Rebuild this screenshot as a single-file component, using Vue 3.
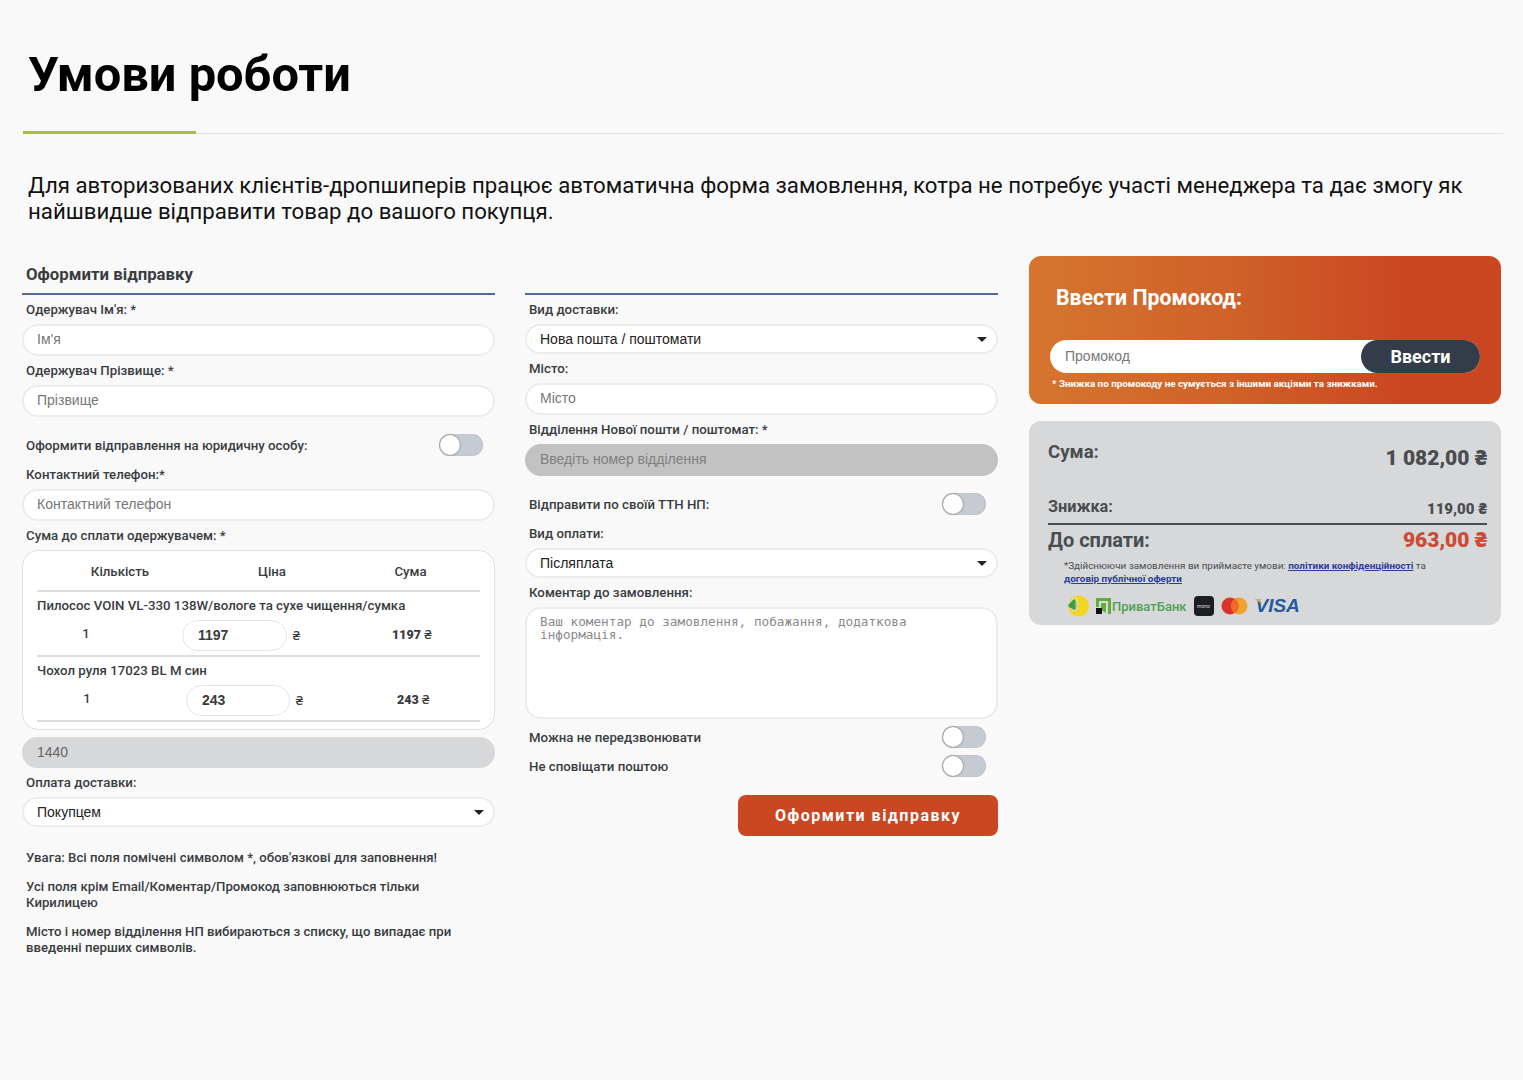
<script setup>
import { ref } from 'vue'

const items = ref([
  { name: 'Пилосос VOIN VL-330 138W/вологе та сухе чищення/сумка', qty: 1, price: '1197', cols: 'row-a' },
  { name: 'Чохол руля 17023 BL M син', qty: 1, price: '243', cols: 'row-b' }
])
</script>

<template>
  <div class="page">
    <h1 class="title">Умови роботи</h1>
    <div class="title-line"><span></span></div>
    <p class="intro">Для авторизованих клієнтів-дропшиперів працює автоматична форма замовлення, котра не потребує участі менеджера та дає змогу як найшвидше відправити товар до вашого покупця.</p>

    <div class="columns">
      <div class="col">
        <h3 class="col-title">Оформити відправку</h3>
        <label class="lbl">Одержувач Ім'я: *</label>
        <input class="inp" placeholder="Ім'я" />
        <label class="lbl">Одержувач Прізвище: *</label>
        <input class="inp" placeholder="Прізвище" />
        <div class="switch-row">
          <span>Оформити відправлення на юридичну особу:</span>
          <i class="toggle"></i>
        </div>
        <label class="lbl">Контактний телефон:*</label>
        <input class="inp" placeholder="Контактний телефон" />
        <label class="lbl">Сума до сплати одержувачем: *</label>

        <div class="goods">
          <div class="goods-head">
            <span>Кількість</span>
            <span>Ціна</span>
            <span>Сума</span>
          </div>
          <div v-for="item in items" :key="item.name" class="good" :class="item.cols">
            <div class="good-name">{{ item.name }}</div>
            <div class="good-row">
              <span class="good-qty">{{ item.qty }}</span>
              <input class="price-inp" :value="item.price" />
              <span class="cur">₴</span>
              <span class="good-sum"><b>{{ item.price }}</b> ₴</span>
            </div>
          </div>
        </div>

        <input class="inp disabled total" value="1440" disabled />
        <label class="lbl">Оплата доставки:</label>
        <div class="sel-wrap">
          <select class="sel"><option>Покупцем</option></select>
        </div>

        <div class="notes">
          <p>Увага: Всі поля помічені символом *, обов'язкові для заповнення!</p>
          <p>Усі поля крім Email/Коментар/Промокод заповнюються тільки Кирилицею</p>
          <p>Місто і номер відділення НП вибираються з списку, що випадає при введенні перших символів.</p>
        </div>
      </div>

      <div class="col">
        <div class="col-title blank"></div>
        <label class="lbl">Вид доставки:</label>
        <div class="sel-wrap">
          <select class="sel"><option>Нова пошта / поштомати</option></select>
        </div>
        <label class="lbl">Місто:</label>
        <input class="inp" placeholder="Місто" />
        <label class="lbl">Відділення Нової пошти / поштомат: *</label>
        <input class="inp disabled dark" placeholder="Введіть номер відділення" disabled />
        <div class="switch-row">
          <span>Відправити по своїй ТТН НП:</span>
          <i class="toggle"></i>
        </div>
        <label class="lbl">Вид оплати:</label>
        <div class="sel-wrap">
          <select class="sel"><option>Післяплата</option></select>
        </div>
        <label class="lbl">Коментар до замовлення:</label>
        <textarea class="area" placeholder="Ваш коментар до замовлення, побажання, додаткова інформація."></textarea>
        <div class="switch-row small">
          <span>Можна не передзвонювати</span>
          <i class="toggle"></i>
        </div>
        <div class="switch-row small">
          <span>Не сповіщати поштою</span>
          <i class="toggle"></i>
        </div>
        <div class="submit-wrap">
          <button class="submit">Оформити відправку</button>
        </div>
      </div>

      <div class="col side">
        <div class="promo">
          <div class="promo-title">Ввести Промокод:</div>
          <div class="promo-form">
            <input class="promo-inp" placeholder="Промокод" />
            <button class="promo-btn">Ввести</button>
          </div>
          <div class="promo-note">* Знижка по промокоду не сумується з іншими акціями та знижками.</div>
        </div>

        <div class="summary">
          <div class="sum-row sum-a">
            <span>Сума:</span>
            <b>1 082,00 ₴</b>
          </div>
          <div class="sum-row sum-b">
            <span>Знижка:</span>
            <b>119,00 ₴</b>
          </div>
          <div class="sum-row sum-c">
            <span>До сплати:</span>
            <b>963,00 ₴</b>
          </div>
          <p class="terms">*Здійснюючи замовлення ви приймаєте умови: <a href="#">політики конфіденційності</a> та <a href="#">договір публічної оферти</a></p>
          <div class="pay">
            <svg width="22" height="22" viewBox="0 0 22 22">
              <circle cx="11.5" cy="11" r="10.5" fill="#f2d525" />
              <path d="M0.5 11 C2 7 5 4 8.5 2.5 C11.5 6 12 12 9 16.5 C5.5 16 2.5 14 0.5 11 Z" fill="#dfe0d0" />
              <path d="M1 11 C2.5 8 5 5.5 8 4 L8.5 15 C5.5 14.5 3 13 1 11 Z" fill="#3f9b46" />
              <path d="M8 4 C10 7 10.5 11.5 8.5 15 C7.5 11 7.5 7.5 8 4 Z" fill="#7dbb52" />
            </svg>
            <div class="privat">
              <svg width="15" height="17" viewBox="0 0 15 17">
                <path d="M0 0 H15 V16 H12 V3 H3 V9 H0 Z" fill="#62ad3e" />
                <path d="M5 5 H10 V15 L7 13 H5 Z" fill="#62ad3e" />
                <rect x="0" y="10" width="6" height="6" fill="#111" />
              </svg>
              <span>ПриватБанк</span>
            </div>
            <div class="mono"><span>mono</span></div>
            <svg width="27" height="18" viewBox="0 0 27 18">
              <circle cx="18" cy="9" r="8.5" fill="#f0a22c" />
              <circle cx="9" cy="9" r="8.5" fill="#d9352a" />
              <path d="M13.5 2 A8.5 8.5 0 0 1 13.5 16 A8.5 8.5 0 0 1 13.5 2 Z" fill="#ee6a25" />
            </svg>
            <div class="visa">VISA</div>
          </div>
        </div>
      </div>
    </div>
  </div>
</template>

<style>
html, body {
  background: #f9f9fa;
}
</style>

<style scoped>
.page {
  height: 1080px;
  box-sizing: border-box;
  padding: 0 20px 0 22px;
  background: #f9f9fa;
  color: #3a3d40;
  font-family: Roboto, "Noto Sans", sans-serif;
  overflow: hidden;
}

.title {
  margin: 0;
  padding: 46px 0 0 6px;
  height: 85px;
  box-sizing: content-box;
  font-size: 48.8px;
  line-height: 58px;
  font-weight: 700;
  color: #000;
}

.title-line {
  height: 1px;
  margin-top: 2px;
  margin-left: 1px;
  background: #e2e2e4;
  position: relative;
}

.title-line::before {
  content: "";
  position: absolute;
  left: 0;
  top: -2px;
  width: 173px;
  height: 3px;
  background: #a9bd45;
}

.intro {
  margin: 38px 30px 0 6px;
  font-size: 22.23px;
  line-height: 26px;
  color: #111;
}

.columns {
  display: grid;
  grid-template-columns: 473px 473px 473px;
  column-gap: 30px;
  margin-top: 32px;
}

.col {
  display: flex;
  flex-direction: column;
}

.col-title {
  margin: 0;
  height: 39px;
  box-sizing: border-box;
  padding: 8px 0 0 4px;
  font-size: 16.8px;
  line-height: 20px;
  font-weight: 700;
  border-bottom: 2px solid #506a9b;
}

.lbl {
  height: 29px;
  padding-left: 4px;
  font-size: 13.25px;
  line-height: 29px;
  font-weight: 500;
}

.inp {
  height: 32px;
  box-sizing: border-box;
  width: 100%;
  padding: 0 13px 2px;
  border: 2px solid #ececec;
  border-radius: 16px;
  background: #fff;
  font-family: "Liberation Sans", Arial, sans-serif;
  font-size: 14px;
  outline: none;
}

.inp::placeholder {
  color: #777;
}

.inp.disabled {
  border-color: #d7d8da;
  background: #d7d8da;
  color: #666;
}

.inp.dark {
  border-color: #c2c2c2;
  background: #c2c2c2;
}

.inp.dark::placeholder {
  color: #808080;
}

.inp.total {
  height: 31px;
  margin-top: 7px;
}

.sel-wrap {
  position: relative;
  height: 30px;
}

.sel-wrap::after {
  content: "";
  position: absolute;
  right: 11px;
  top: 13px;
  border-left: 5px solid transparent;
  border-right: 5px solid transparent;
  border-top: 5px solid #222;
}

.sel {
  appearance: none;
  width: 100%;
  height: 30px;
  padding: 0 13px;
  border: 2px solid #ececec;
  border-radius: 15px;
  background: #fff;
  font-family: "Liberation Sans", Arial, sans-serif;
  font-size: 14px;
  color: #222;
  outline: none;
}

.switch-row {
  display: flex;
  align-items: center;
  justify-content: space-between;
  height: 22px;
  padding: 17px 12px 4px 4px;
  font-size: 13.25px;
  font-weight: 500;
}

.switch-row.small {
  padding-top: 7px;
  padding-bottom: 0;
}

.toggle {
  width: 44px;
  height: 22px;
  box-sizing: border-box;
  border-radius: 11px;
  background: #c6cad3;
  position: relative;
  box-shadow: inset 0 0 1px rgba(0, 0, 0, 0.25);
}

.toggle::before {
  content: "";
  position: absolute;
  left: 1px;
  top: 1px;
  width: 20px;
  height: 20px;
  border-radius: 50%;
  background: #fff;
  box-shadow: 0 0 2px rgba(0, 0, 0, 0.6);
}

.goods {
  height: 180px;
  box-sizing: border-box;
  padding: 0 14px;
  border: 1px solid #dfdfdf;
  border-radius: 16px;
  background: #fff;
  font-size: 13.25px;
  font-weight: 500;
}

.goods-head {
  display: grid;
  grid-template-columns: 166px 138px 1fr;
  height: 41px;
  box-sizing: border-box;
  border-bottom: 2px solid #ddd;
  line-height: 42px;
  text-align: center;
}

.good {
  border-bottom: 2px solid #ddd;
  height: 63px;
}

.good-name {
  height: 27px;
  line-height: 28px;
}

.good-row {
  display: flex;
  align-items: center;
  height: 32px;
}

.good-qty {
  margin-top: -3px;
  text-align: center;
  font-size: 13px;
}

.price-inp {
  height: 31px;
  box-sizing: border-box;
  padding: 0 15px 1px;
  border: 1px solid #e4e4e4;
  border-radius: 16px;
  background: #fff;
  font-family: "Liberation Sans", Arial, sans-serif;
  font-size: 14px;
  font-weight: 700;
  color: #3a3d40;
  outline: none;
}

.cur {
  width: 13px;
  text-align: right;
  font-size: 13px;
}

.good-sum {
  margin-top: -3px;
}

.good-sum b {
  font-weight: 900;
  font-size: 12.5px;
}

.row-a .good-qty { width: 98px; }
.row-a .price-inp { width: 105px; margin-left: 47px; }
.row-a .good-sum { margin-left: 92px; }
.row-b .good-qty { width: 100px; }
.row-b .price-inp { width: 104px; margin-left: 49px; }
.row-b .good-sum { margin-left: 94px; }

.notes {
  margin-top: 23px;
  padding-left: 4px;
  font-size: 13.2px;
  line-height: 16px;
  font-weight: 500;
}

.notes p {
  margin: 0 0 13px;
  padding-right: 30px;
}

.blank {
  padding: 0;
}

.area {
  height: 112px;
  box-sizing: border-box;
  width: 100%;
  padding: 6px 13px;
  border: 2px solid #ececec;
  border-radius: 16px;
  background: #fff;
  font-family: "DejaVu Sans Mono", monospace;
  font-size: 12.7px;
  line-height: 13px;
  resize: none;
  outline: none;
}

.area::placeholder {
  color: #8a8a8a;
}

.submit-wrap {
  display: flex;
  justify-content: flex-end;
  margin-top: 18px;
}

.submit {
  width: 260px;
  height: 41px;
  border: 0;
  border-radius: 8px;
  background: #cb4722;
  color: #fff;
  font-family: Roboto, sans-serif;
  font-size: 16px;
  font-weight: 700;
  letter-spacing: 1.5px;
}

.side {
  gap: 17px;
  margin-left: 1px;
}

.promo {
  height: 148px;
  box-sizing: border-box;
  padding: 29px 21px 0;
  border-radius: 12px;
  background: linear-gradient(90deg, #d6752f 0%, #cf6029 45%, #cb4722 78%);
  color: #fff;
}

.promo-title {
  padding-left: 6px;
  font-size: 21.3px;
  line-height: 26px;
  font-weight: 700;
}

.promo-form {
  display: flex;
  height: 33px;
  margin-top: 29px;
  border-radius: 17px;
  background: #fff;
}

.promo-inp {
  flex: 1;
  min-width: 0;
  padding: 0 15px 2px;
  border: 0;
  border-radius: 17px 0 0 17px;
  background: transparent;
  font-family: "Liberation Sans", Arial, sans-serif;
  font-size: 14px;
  outline: none;
}

.promo-inp::placeholder {
  color: #777;
}

.promo-btn {
  width: 119px;
  border: 0;
  border-radius: 17px;
  background: #333c48;
  color: #fff;
  font-family: Roboto, sans-serif;
  font-size: 18px;
  font-weight: 700;
}

.promo-note {
  margin-top: 5px;
  padding-left: 2px;
  font-size: 9.8px;
  line-height: 12px;
  font-weight: 700;
  white-space: nowrap;
}

.summary {
  height: 204px;
  box-sizing: border-box;
  padding: 18px 14px 0 19px;
  border-radius: 12px;
  background: #d7d8da;
  color: #4a4d50;
}

.sum-row {
  display: flex;
  justify-content: space-between;
  font-weight: 700;
}

.sum-row b {
  font-weight: 900;
}

.sum-a {
  height: 50px;
  font-size: 18.6px;
  line-height: 26px;
}

.sum-a b {
  padding-top: 6px;
  font-size: 21px;
}

.sum-b {
  height: 27px;
  padding-top: 7px;
  font-size: 16.3px;
  line-height: 22px;
  border-bottom: 2px solid #4a4d50;
  box-sizing: content-box;
}

.sum-b b {
  padding-top: 2px;
  font-size: 15px;
}

.sum-c {
  height: 32px;
  padding-top: 1px;
  font-size: 20px;
  line-height: 28px;
}

.sum-c b {
  font-size: 21px;
  color: #cc4a33;
}

.terms {
  margin: 1px 40px 0 16px;
  font-size: 9.9px;
  line-height: 13px;
}

.terms a {
  color: #2c3e9b;
  font-weight: 700;
}

.pay {
  display: flex;
  align-items: center;
  gap: 7px;
  margin-top: 10px;
  padding-left: 19px;
}

.privat {
  display: flex;
  align-items: center;
  gap: 1px;
  font-size: 13px;
  font-weight: 500;
  color: #4f9f55;
}

.mono {
  width: 20px;
  height: 20px;
  border-radius: 4px;
  background: #1c1e24;
  display: flex;
  align-items: center;
  justify-content: center;
  color: #ddd;
  font-size: 5px;
}

.visa {
  position: relative;
  margin-left: 1px;
  font-family: "Liberation Sans", Arial, sans-serif;
  font-size: 19px;
  font-weight: 700;
  font-style: italic;
  color: #25589f;
}

.visa::before {
  content: "";
  position: absolute;
  left: -1px;
  top: 4px;
  width: 6px;
  height: 4px;
  background: #d9a85e;
  clip-path: polygon(0 0, 100% 0, 100% 100%);
}
</style>
